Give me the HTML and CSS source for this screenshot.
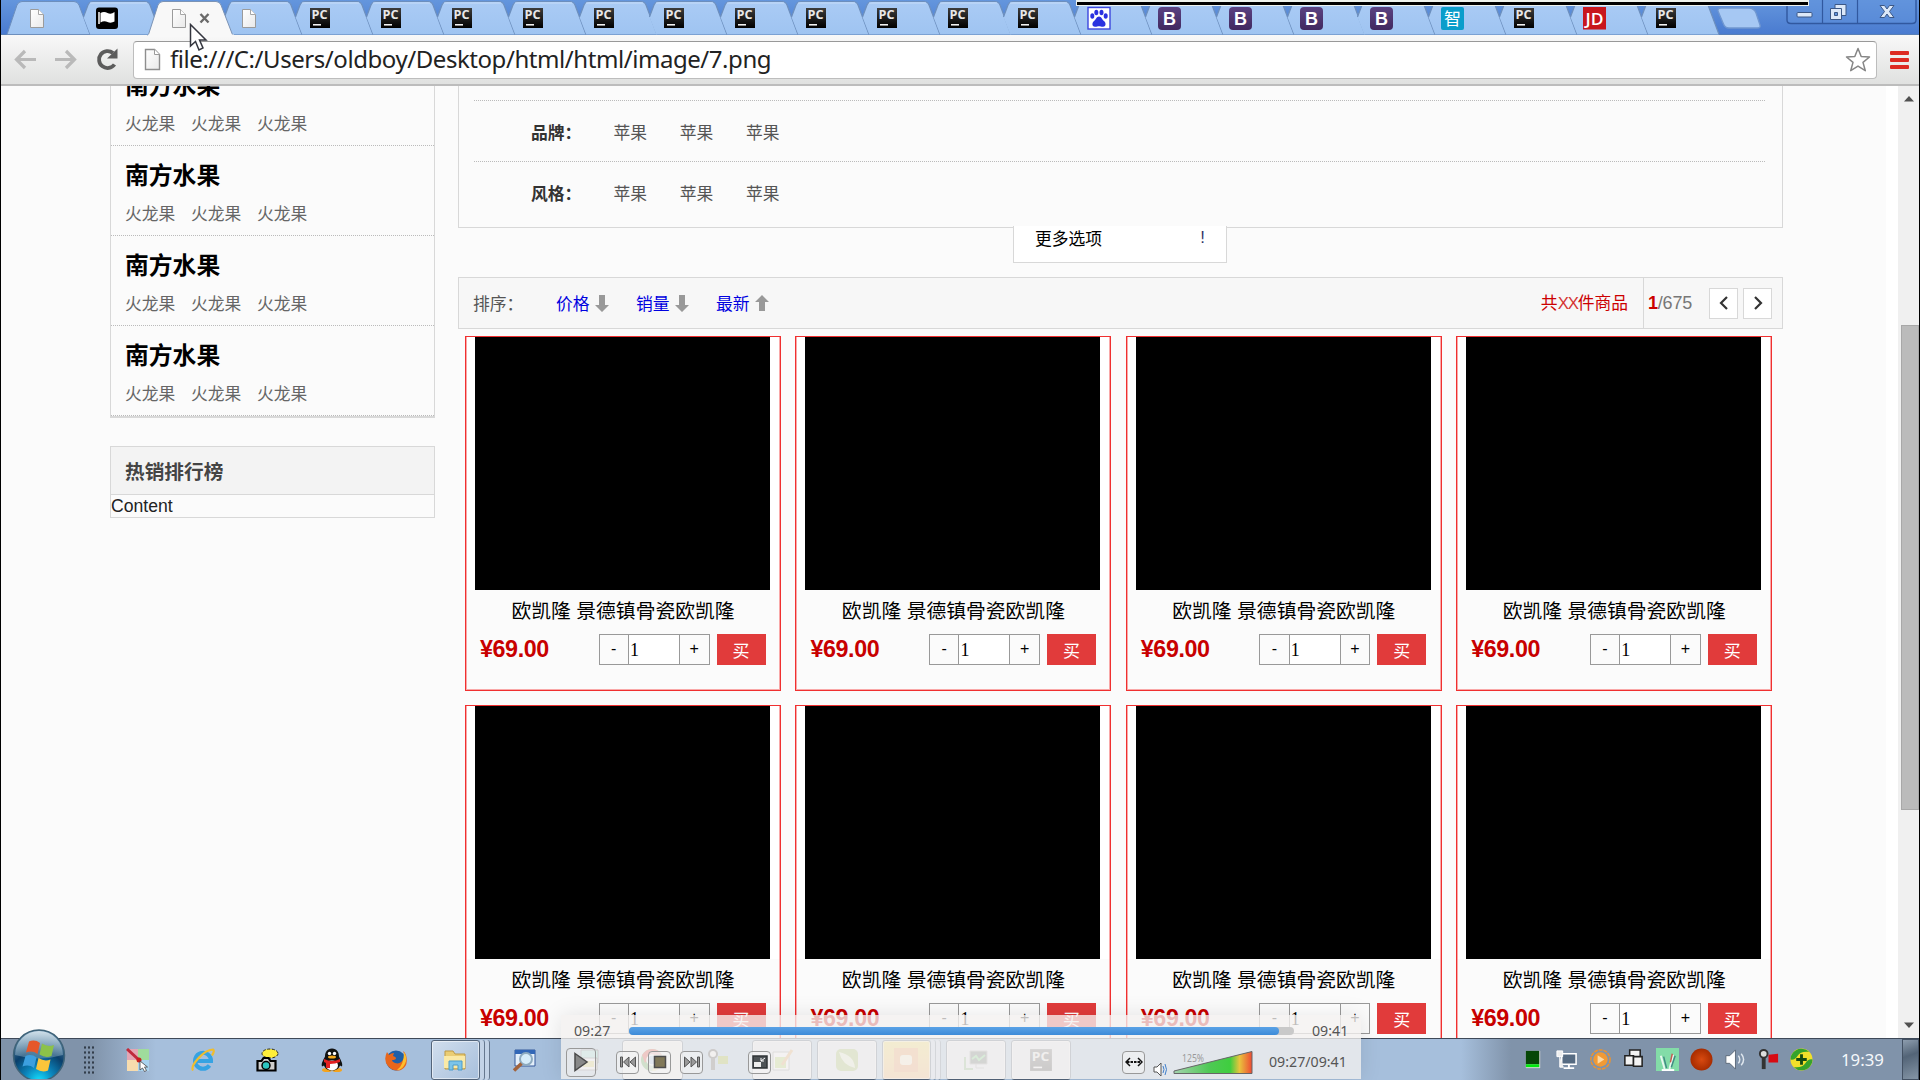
FILE: index.html
```html
<!DOCTYPE html>
<html lang="zh-CN">
<head>
<meta charset="utf-8">
<title>7.png</title>
<link rel="stylesheet" href="styles.css">
</head>
<body>
<svg class="defs" width="0" height="0">
  <defs>
    <linearGradient id="gTab" x1="0" y1="0" x2="0" y2="1"><stop offset="0" stop-color="#aacbf5"/><stop offset="1" stop-color="#9fc4f1"/></linearGradient>
    <linearGradient id="gDoc" x1="0" y1="0" x2="1" y2="1"><stop offset="0" stop-color="#fff"/><stop offset="1" stop-color="#e9e9e9"/></linearGradient>
    <linearGradient id="gPc" x1="0" y1="0" x2="0" y2="1"><stop offset="0" stop-color="#3c3c3c"/><stop offset="1" stop-color="#000"/></linearGradient>
    <linearGradient id="gB" x1="0" y1="0" x2="0" y2="1"><stop offset="0" stop-color="#5b4282"/><stop offset="1" stop-color="#41295f"/></linearGradient>
    <radialGradient id="gOrb" cx=".5" cy="1" r=".95"><stop offset="0" stop-color="#16e2ff"/><stop offset=".3" stop-color="#0b86bd"/><stop offset=".62" stop-color="#0a3f6b"/><stop offset="1" stop-color="#5c87a6"/></radialGradient>
    <linearGradient id="gGloss" x1="0" y1="0" x2="0" y2="1"><stop offset="0" stop-color="#e4eff5" stop-opacity=".85"/><stop offset="1" stop-color="#9dbccd" stop-opacity=".35"/></linearGradient>
    <linearGradient id="gVol" x1="0" y1="0" x2="1" y2="0"><stop offset="0" stop-color="#a5d3ae"/><stop offset=".45" stop-color="#4fc955"/><stop offset=".72" stop-color="#3fce3f"/><stop offset=".84" stop-color="#e9c33d"/><stop offset="1" stop-color="#ee4a33"/></linearGradient>
    <radialGradient id="gRed"><stop offset="0" stop-color="#d94a10"/><stop offset="1" stop-color="#a72c00"/></radialGradient>
    <g id="tab"><path d="M12.2 34.500L5.500 17L10 5Q11.500 1.500 15 1.500H67Q70.500 1.500 72 5L83 34.500Z" fill="url(#gTab)"/><path d="M5.500 17L10 5Q11.500 1.500 15 1.500H67Q70.500 1.500 72 5L83 34.500" fill="none" stroke="#6d8fbd" stroke-width="1.200"/><path d="M12 3H69" stroke="#c7dcf8"/></g>
    <g id="doc"><path d="M23.500 9.500h8l5 5v13h-13z" fill="url(#gDoc)" stroke="#9b9b9b"/><path d="M31.500 9.500v5h5" fill="#fff" stroke="#a6a6a6"/></g>
    <g id="pc"><rect x="20" y="8" width="20" height="20" fill="url(#gPc)"/><text x="21.500" y="19" font-family="Open Sans" font-weight="700" font-size="12" fill="#e8e8e8" textLength="16" lengthAdjust="spacingAndGlyphs">PC</text><path d="M23 24.800h8" stroke="#fff" stroke-width="1.500"/></g>
    <g id="bs"><rect x="18" y="7" width="23" height="23" rx="4" fill="url(#gB)"/><text x="29.500" y="24.500" text-anchor="middle" font-family="Liberation Sans" font-weight="700" font-size="18" fill="#fff">B</text></g>
  </defs>
</svg>

<header class="strip">
  <div class="tabs">
    <svg class="tab"><path d="M0 34.500L10 5Q11.500 1.500 15 1.500H67Q70.500 1.500 72 5L83 34.500Z" fill="url(#gTab)" stroke="#6d8fbd"/><use href="#doc"/></svg>
    <svg class="tab"><use href="#tab"/><rect x="18" y="7.500" width="22" height="21.500" rx="3" fill="#000"/><path d="M21 12v12" stroke="#fff" stroke-width="1.500"/><path d="M22.500 13q3.500-2 7 0t7-1v9.500q-3.500 2-7 .5t-7 .5z" fill="#fff"/></svg>
    <svg class="tab active"><path d="M-1 36L9 5Q10.500 1.500 14 1.500H67Q70.500 1.500 72 5L84 36Z" fill="#f8f8f8" stroke="#7b93b5"/><path d="M-1 36H85" stroke="#f8f8f8" stroke-width="3"/><use href="#doc"/><path d="M51.500 14l8 8.500m0-8.500l-8 8.500" stroke="#6a6a6a" stroke-width="2.400"/></svg>
    <svg class="tab"><use href="#tab"/><use href="#doc"/></svg>
    <svg class="tab"><use href="#tab"/><use href="#pc"/></svg>
    <svg class="tab"><use href="#tab"/><use href="#pc"/></svg>
    <svg class="tab"><use href="#tab"/><use href="#pc"/></svg>
    <svg class="tab"><use href="#tab"/><use href="#pc"/></svg>
    <svg class="tab"><use href="#tab"/><use href="#pc"/></svg>
    <svg class="tab"><use href="#tab"/><use href="#pc"/></svg>
    <svg class="tab"><use href="#tab"/><use href="#pc"/></svg>
    <svg class="tab"><use href="#tab"/><use href="#pc"/></svg>
    <svg class="tab"><use href="#tab"/><use href="#pc"/></svg>
    <svg class="tab"><use href="#tab"/><use href="#pc"/></svg>
    <svg class="tab"><use href="#tab"/><use href="#pc"/></svg>
    <svg class="tab"><use href="#tab"/><rect x="19" y="7.500" width="22" height="21.500" fill="#fff" stroke="#3c46dd" stroke-width="1.400"/><g fill="#2a32e0" transform="translate(1)"><ellipse cx="22.300" cy="16" rx="2" ry="2.800"/><ellipse cx="26.300" cy="12.500" rx="2" ry="2.800"/><ellipse cx="31.500" cy="12.500" rx="2" ry="2.800"/><ellipse cx="35.700" cy="16" rx="2" ry="2.800"/><path d="M29 16.500c2.500 0 3 3 5 4.500s2.500 5.500-1 5.800c-2 0-2.500-.6-4-.6s-2 .6-4 .6c-3.500-.3-3-4.300-1-5.800s2.500-4.500 5-4.500z"/></g></svg>
    <svg class="tab"><use href="#tab"/><use href="#bs"/></svg>
    <svg class="tab"><use href="#tab"/><use href="#bs"/></svg>
    <svg class="tab"><use href="#tab"/><use href="#bs"/></svg>
    <svg class="tab"><use href="#tab"/><use href="#bs"/></svg>
    <svg class="tab"><use href="#tab"/><rect x="18" y="7" width="23" height="23" rx="2" fill="#0a9dcb"/><text x="29.500" y="24.500" text-anchor="middle" font-family="Noto Sans CJK SC" font-size="17" fill="#fff">智</text></svg>
    <svg class="tab"><use href="#tab"/><use href="#pc"/></svg>
    <svg class="tab"><use href="#tab"/><rect x="18" y="7" width="23" height="22.500" fill="#c8161d"/><text x="29.500" y="24.500" text-anchor="middle" font-family="Open Sans" font-weight="600" font-size="16" fill="#fff" textLength="18" lengthAdjust="spacingAndGlyphs">JD</text></svg>
    <svg class="tab"><use href="#tab"/><use href="#pc"/></svg>
  </div>
  <svg class="newtab" width="46" height="24"><path d="M5 1H33Q38 1 40 6L44 18Q45 21 41 21H13Q9 21 7.500 17L2 4Q1.500 1 5 1Z" fill="#a6c8f3" stroke="#7097d0" stroke-width="1.300"/></svg>
  <svg class="controls" width="132" height="26"><path d="M1 0V20Q1 23.500 5 23.500H126Q130 23.500 130 20V0" fill="#5f92db" fill-opacity=".5" stroke="#31589f" stroke-width="1.400"/><path d="M36.500 0V23M71.500 0V23" stroke="#31589f" stroke-width="1.200"/><rect x="11" y="12.500" width="15" height="4.500" rx="1" fill="#dce8f8" stroke="#3c5886"/><path d="M49 4.500h11v11h-11z" fill="#dce8f8" stroke="#3c5886"/><path d="M44.500 8.500h11v11h-11z" fill="#dce8f8" stroke="#3c5886"/><path d="M48.500 12.500h3v3h-3z" fill="#5f92db" stroke="#3c5886"/><path d="M94 5.500h4.500l2.500 3.500 2.500-3.500h4.500l-4.500 6 4.500 6h-4.500l-2.500-3.500-2.500 3.500h-4.500l4.500-6z" fill="#dce8f8" stroke="#3c5886"/></svg>
</header>
<div class="recorder-edge"></div>

<nav class="toolbar">
  <svg class="nav-icons" width="131" height="49"><g fill="none" stroke="#b9b9b9" stroke-width="3.200"><path d="M36 24.500H17M25 16l-8.500 8.500L25 33"/><path d="M55 24.500H74M66 16l8.500 8.500L66 33"/></g><path d="M114.500 29.500A8.500 8.500 0 1 1 113 18" fill="none" stroke="#5c5c5c" stroke-width="3.800"/><path d="M117.500 13.500v10h-10.500z" fill="#5c5c5c"/></svg>
  <div class="omnibox">
    <svg width="18" height="24"><path d="M1.500 1.500h9l5 5v15h-14z" fill="url(#gDoc)" stroke="#8e8e8e" stroke-width="1.400"/><path d="M10.500 1.500v5h5" fill="#fff" stroke="#9a9a9a"/></svg>
    <span class="url">file:///C:/Users/oldboy/Desktop/html/html/image/7.png</span>
    <svg class="star" width="26" height="26"><path d="M13 1.500l3.200 8 8.300.5-6.500 5.400 2.300 8.300L13 19.100l-7.300 4.600L8 15.400 1.500 10l8.300-.5z" fill="#fff" stroke="#868686" stroke-width="1.500" stroke-linejoin="round"/></svg>
  </div>
  <div class="menu"><i></i><i></i><i></i></div>
</nav>

<div class="viewport">
  <main class="page">
    <aside class="side">
      <ul class="cats">
        <li><h3>南方水果</h3><p><a>火龙果</a><a>火龙果</a><a>火龙果</a></p></li>
        <li><h3>南方水果</h3><p><a>火龙果</a><a>火龙果</a><a>火龙果</a></p></li>
        <li><h3>南方水果</h3><p><a>火龙果</a><a>火龙果</a><a>火龙果</a></p></li>
        <li><h3>南方水果</h3><p><a>火龙果</a><a>火龙果</a><a>火龙果</a></p></li>
      </ul>
      <section class="hot"><h4>热销排行榜</h4><div>Content</div></section>
    </aside>
    <section class="main">
      <div class="filter">
        <div class="frow first"></div>
        <div class="frow"><b>品牌：</b><a>苹果</a><a>苹果</a><a>苹果</a></div>
        <div class="frow"><b>风格：</b><a>苹果</a><a>苹果</a><a>苹果</a></div>
      </div>
      <div class="more"><span>更多选项</span><span class="bang">!</span></div>
      <div class="sort">
        <span class="lbl">排序：</span>
        <a>价格<svg width="14" height="17"><path d="M4 0h6v10h4l-7 7-7-7h4z" fill="#999"/></svg></a>
        <a>销量<svg width="14" height="17"><path d="M4 0h6v10h4l-7 7-7-7h4z" fill="#999"/></svg></a>
        <a>最新<svg width="14" height="17"><path d="M4 16h6V7h4L7 0 0 7h4z" fill="#999"/></svg></a>
        <span class="total">共<i>XX</i>件商品</span>
        <div class="pager"><span><b>1</b>/675</span>
          <button><svg width="10" height="14"><path d="M8 1L2 7l6 6" fill="none" stroke="#333" stroke-width="2.200"/></svg></button>
          <button><svg width="10" height="14"><path d="M2 1l6 6-6 6" fill="none" stroke="#333" stroke-width="2.200"/></svg></button>
        </div>
      </div>
      <div class="goods">
        <article><div class="pic"></div><h5>欧凯隆 景德镇骨瓷欧凯隆</h5><div class="buy"><strong>¥69.00</strong><div class="qty"><span>-</span><em>1</em><span>+</span></div><button>买</button></div></article>
        <article><div class="pic"></div><h5>欧凯隆 景德镇骨瓷欧凯隆</h5><div class="buy"><strong>¥69.00</strong><div class="qty"><span>-</span><em>1</em><span>+</span></div><button>买</button></div></article>
        <article><div class="pic"></div><h5>欧凯隆 景德镇骨瓷欧凯隆</h5><div class="buy"><strong>¥69.00</strong><div class="qty"><span>-</span><em>1</em><span>+</span></div><button>买</button></div></article>
        <article><div class="pic"></div><h5>欧凯隆 景德镇骨瓷欧凯隆</h5><div class="buy"><strong>¥69.00</strong><div class="qty"><span>-</span><em>1</em><span>+</span></div><button>买</button></div></article>
        <article><div class="pic"></div><h5>欧凯隆 景德镇骨瓷欧凯隆</h5><div class="buy"><strong>¥69.00</strong><div class="qty"><span>-</span><em>1</em><span>+</span></div><button>买</button></div></article>
        <article><div class="pic"></div><h5>欧凯隆 景德镇骨瓷欧凯隆</h5><div class="buy"><strong>¥69.00</strong><div class="qty"><span>-</span><em>1</em><span>+</span></div><button>买</button></div></article>
        <article><div class="pic"></div><h5>欧凯隆 景德镇骨瓷欧凯隆</h5><div class="buy"><strong>¥69.00</strong><div class="qty"><span>-</span><em>1</em><span>+</span></div><button>买</button></div></article>
        <article><div class="pic"></div><h5>欧凯隆 景德镇骨瓷欧凯隆</h5><div class="buy"><strong>¥69.00</strong><div class="qty"><span>-</span><em>1</em><span>+</span></div><button>买</button></div></article>
      </div>
    </section>
  </main>
  <div class="scroll">
    <svg width="12" height="7"><path d="M1 6.500L6 1l5 5.500z" fill="#505050"/></svg>
    <div class="thumb"></div>
    <svg width="12" height="7"><path d="M1 .5L6 6l5-5.500z" fill="#505050"/></svg>
  </div>
</div>

<footer class="taskbar">
  <div class="dock">
    <svg class="orb" width="54" height="50"><circle cx="27" cy="26.500" r="25.500" fill="url(#gOrb)" stroke="#3f6378" stroke-width="1.500"/><path d="M3 26A24 24 0 0 1 51 26Q27 33 3 26Z" fill="url(#gGloss)"/><path d="M17 12.500q6-2.500 11 1.500l-2.500 11q-5-4-11.500-1.500z" fill="#e5572a"/><path d="M30 14.500q6 4 12 1.500l-2.500 11q-6 2.500-12-1.500z" fill="#8cc249"/><path d="M13.500 27q6-2.500 11 1.500l-2.500 10.500q-5-4-11.500-1.500z" fill="#3c9fdf"/><path d="M26.500 29q6 4 12 1.500l-2.500 11q-6 2.500-12-1.500z" fill="#fbc53b"/></svg>
    <div class="grip"></div>
    <svg class="ico" viewBox="0 0 24 24"><path d="M1 1h11v11H1z" fill="#e4a6b4"/><path d="M12 1h11v11H12z" fill="#9fdc9c"/><path d="M1 12h11v11H1z" fill="#f7dcae"/><path d="M12 12h11v11H12z" fill="#a9d3ee"/><path d="M1 1l12 11" stroke="#c02a3c" stroke-width="3"/><circle cx="13" cy="12" r="2.500" fill="#c81e1e"/><path d="M14 13v9l2.500-2 2 3.500 2-1-2-3.500h3z" fill="#fff" stroke="#444" stroke-width=".8"/></svg>
    <svg class="ico" viewBox="0 0 24 24"><path d="M18.500 17.500A8 8 0 1 1 20 13H6" fill="none" stroke="#35a3e3" stroke-width="4"/><path d="M2 22.500C-1 18 12 2 22 1.500q2 1-1 6" fill="none" stroke="#f0bd2e" stroke-width="2.200"/></svg>
    <svg class="ico" viewBox="0 0 24 24"><ellipse cx="15" cy="5.500" rx="8" ry="4.500" fill="#ffee3a" stroke="#222" stroke-dasharray="3 1.500"/><path d="M2.500 13h4l2-3h5l2 3h5v9.500h-18z" fill="#cdcdcd" stroke="#000" stroke-width="2.200"/><circle cx="11" cy="17.500" r="4" fill="#2ec6c1" stroke="#000" stroke-width="1.500"/></svg>
    <svg class="ico" viewBox="0 0 24 24"><ellipse cx="7" cy="22" rx="5" ry="2" fill="#f4a31d"/><ellipse cx="17" cy="22" rx="5" ry="2" fill="#f4a31d"/><path d="M12 .5c5 0 7 4 7 8 2 4 4 7 3 10l-2-1c-1 3-4 5-8 5s-7-2-8-5l-2 1c-1-3 1-6 3-10 0-4 2-8 7-8z" fill="#111"/><ellipse cx="12" cy="17.500" rx="6" ry="5" fill="#fff"/><circle cx="9.500" cy="5.500" r="1.700" fill="#fff"/><circle cx="14.500" cy="5.500" r="1.700" fill="#fff"/><ellipse cx="12" cy="9" rx="4" ry="1.500" fill="#f7a81b"/><path d="M4 11q8 4 16 0v3q-5 2-10 2v4H6v-5l-2-1z" fill="#e22020"/></svg>
    <svg class="ico" viewBox="0 0 24 24"><circle cx="12" cy="12.500" r="10" fill="#1f5fa8"/><path d="M3 4q-4 8 1 14t13 4q8-4 5-15-1-3-3-4 2 4 1 7-3 7-9 5-3-1-3-3 4 0 4-2 0-1-3-2l1-3q-3 0-5 2z" fill="#e8661b"/><path d="M20 4q4 6 1 12t-8 6q7-5 7-18z" fill="#fdbe2d"/></svg>
    <div class="win explorer"><svg class="ico" viewBox="0 0 24 24"><path d="M2 3h8l2 3h10v15H2z" fill="#eacd74" stroke="#bd9a45"/><path d="M1 8h21v12H1z" fill="#fae9a6"/><path d="M6 22v-9h13v9h-4v-5h-5v5z" fill="#7bc4ea" stroke="#4c9ccb"/></svg></div>
    <div class="stack"></div><div class="stack"></div>
    <svg class="ico mag" viewBox="0 0 24 24"><path d="M3 2h20v16H3z" fill="#e4effa" stroke="#34589a"/><path d="M3 2h20v4H3z" fill="#3267b7"/><circle cx="14" cy="11" r="6" fill="#d5ecfa" fill-opacity=".9" stroke="#8eabc0" stroke-width="2"/><path d="M9.500 15.500L2 22.500" stroke="#a2633c" stroke-width="3.500"/></svg>
    <svg class="ico card" viewBox="0 0 24 24"><path d="M5 2h17v13H5z" fill="#80d8c9" stroke="#444"/><path d="M1 10h20v12H1z" fill="#fff" stroke="#444"/><path d="M7 13h11v6H7z" fill="#e9d13c"/></svg>
    <div class="win w61"><svg class="ico" viewBox="0 0 24 24"><circle cx="12" cy="12" r="11" fill="#57a54f"/><path d="M12 1a11 11 0 0 1 10 6H12L5 15 2 7q4-6 10-6z" fill="#dc3d34"/><path d="M22 7a11 11 0 0 1-10 16l5-9z" fill="#f3cb35"/><circle cx="12" cy="12" r="5" fill="#3d7cc8" stroke="#fff" stroke-width="1.500"/></svg></div>
    <svg class="ico key" viewBox="0 0 24 24"><circle cx="7" cy="6" r="4" fill="#eee" stroke="#444" stroke-width="2"/><path d="M7 10v12" stroke="#555" stroke-width="4"/><path d="M12 8h10v8H12z" fill="#9bb32c"/></svg>
    <div class="win w60"><svg class="ico" viewBox="0 0 24 24"><path d="M3 4h16v18H3z" fill="#fff" stroke="#777"/><path d="M5 9h11v11H5z" fill="#a7d33c"/><path d="M22 2L12 17" stroke="#e4912d" stroke-width="3"/></svg></div>
    <div class="win w60"><svg class="ico" viewBox="0 0 24 24"><rect x="1" y="1" width="22" height="22" rx="5" fill="#8bad35"/><path d="M4 4q3 13 16 16Q19 7 4 4z" fill="#e9f2c4"/></svg></div>
    <div class="win w49"><svg class="ico" viewBox="0 0 24 24"><path d="M0 0h24v24H0z" fill="#f0935f"/><rect x="6" y="7" width="12" height="10" rx="3" fill="#fff"/></svg></div>
    <div class="stack"></div><div class="stack"></div>
    <div class="win w60 last"><svg class="ico" viewBox="0 0 24 24"><path d="M6 3h17v13H6z" fill="#364137" stroke="#999"/><path d="M8 11l4-3 3 4 6-5" stroke="#53d35d" stroke-width="2" fill="none"/><path d="M1 9v12h8" stroke="#65a358" stroke-width="2" fill="none"/><path d="M12 16v4h8" stroke="#999" fill="none"/></svg></div>
    <div class="win w60"><svg class="ico" viewBox="19 7 22 22"><use href="#pc"/></svg></div>
  </div>
  <div class="tray">
    <svg viewBox="0 0 24 24"><path d="M4 3h15v18H4z" fill="#dadada"/><path d="M4 3h14v14H4z" fill="#064706"/><path d="M4 17h14v3H4z" fill="#00e90e"/></svg>
    <svg viewBox="0 0 24 24"><path d="M7 6h15v11H7z" fill="#566b82" stroke="#fff" stroke-width="1.600"/><path d="M9 21h11M14.500 17v4" stroke="#fff" stroke-width="2"/><path d="M2 3h6v6H2zM5 9v11h4" fill="#eee" stroke="#fff"/></svg>
    <svg viewBox="0 0 24 24"><circle cx="12" cy="12" r="10" fill="none" stroke="#f0932b" stroke-width="1.500" stroke-dasharray="4 1"/><circle cx="12" cy="12" r="7.500" fill="#f19a35"/><path d="M9 7.500l7 4.500-7 4.500z" fill="#fbd9a5"/></svg>
    <svg viewBox="0 0 24 24" fill="#f3f3f3" stroke="#222" stroke-width="1.600"><path d="M8 2h11v9H8z"/><path d="M3 8h9v10H3z"/><path d="M12 9h9v10h-9z" /></svg>
    <svg viewBox="0 0 24 24"><path d="M0 0h24v24H0z" fill="#83dca8"/><path d="M5 8l4 14M18 7l-4 15" stroke="#e9f7ef" stroke-width="2"/><path d="M8 9l3 12M20 8l-4 12" stroke="#408a84" stroke-width="1.500"/><path d="M17 6l-2 9" stroke="#c5584e" stroke-width="1.500"/><path d="M6 23h13" stroke="#fff" stroke-width="2"/></svg>
    <svg viewBox="0 0 24 24"><circle cx="12" cy="12" r="11.500" fill="url(#gRed)"/></svg>
    <svg viewBox="0 0 24 24"><path d="M3 8h4l6-6v20l-6-6H3z" fill="#fff" stroke="#5c6a79"/><path d="M16 8q3 4 0 8M19 6q5 6 0 12" fill="none" stroke="#dfe7ee" stroke-width="1.500"/></svg>
    <svg viewBox="0 0 24 24"><circle cx="7" cy="6" r="4" fill="#ddd" stroke="#333" stroke-width="2"/><path d="M7 10v12" stroke="#333" stroke-width="4"/><path d="M12 7l10-1v9H12z" fill="#d70b12"/></svg>
    <svg viewBox="0 0 24 24"><circle cx="12" cy="12" r="11.500" fill="#f2e02a"/><path d="M3 5A11.500 11.500 0 0 1 20 4q-9-1-12 4t-7.500 4q0-4 2.500-7z" fill="#35a32c"/><path d="M21 19A11.500 11.500 0 0 1 4 20q9 1 12-4t7.500-4q0 4-2.500 7z" fill="#35a32c"/><path d="M12 6.500v11M6.500 12h11" stroke="#164b12" stroke-width="3"/></svg>
    <time>19:39</time>
    <div class="desk"></div>
  </div>
</footer>

<div class="player">
  <div class="seek"><span>09:27</span><div class="track"><div class="fill"></div></div><span>09:41</span></div>
  <div class="ctl">
    <button class="play"><svg width="18" height="22"><path d="M3 2.500l12 8.500L3 19.500z" fill="#888" stroke="#4a4a4a" stroke-width="1.500"/></svg></button>
    <button class="prev"><svg width="18" height="14"><path d="M1.500 2h2v10h-2zM10 2v10L4.500 7zM16.500 2v10L11 7z" fill="#999" stroke="#555"/></svg></button>
    <button class="stop"><svg width="14" height="14"><path d="M1.500 1.500h11v11h-11z" fill="#807858" stroke="#4d4d4d" stroke-width="1.500"/></svg></button>
    <button class="next"><svg width="18" height="14"><path d="M14.500 2h2v10h-2zM8 2v10l5.500-5zM1.500 2v10L7 7z" fill="#999" stroke="#555"/></svg></button>
    <button class="full"><svg width="16" height="14"><path d="M1 1h14v12H1z" fill="#4e5356" stroke="#303437" stroke-width="1.500"/><path d="M2 7h7v5H2z" fill="#eee"/><path d="M13 3l-4 3M9 3v3h3" stroke="#fff" fill="none"/></svg></button>
    <button class="fit"><svg width="18" height="10"><path d="M5 1L1 5l4 4M13 1l4 4-4 4" fill="none" stroke="#111" stroke-width="1.500"/><path d="M2 5h14" stroke="#111" stroke-width="2" stroke-dasharray="2.500 1"/></svg></button>
    <svg class="spk" width="15" height="15"><path d="M1 5h3l4-4v13l-4-4H1z" fill="#fff" stroke="#555"/><path d="M10 4q2 3.500 0 7M12 2q3 5.500 0 11" fill="none" stroke="#3f7fcb"/></svg>
    <svg class="vol" width="82" height="26"><path d="M2 24.500V22L80 2.500v22z" fill="url(#gVol)" stroke="#666"/><text x="10" y="12.500" font-family="Noto Sans" font-size="10" fill="#9a9a9a" textLength="22" lengthAdjust="spacingAndGlyphs">125%</text></svg>
    <span class="time">09:27/09:41</span>
  </div>
</div>
<svg class="cursor" width="20" height="30"><path d="M1.500 1.500V23l5-4.500L10 27l4-2-3.500-8H17z" fill="#fff" stroke="#34363f" stroke-width="1.500"/></svg>
</body>
</html>
```
FILE: styles.css
```css
* { box-sizing: border-box; }
body {
  margin: 0; width: 1920px; height: 1080px; overflow: hidden; position: relative;
  display: flex; flex-direction: column;
  background: #fff; border: solid #000; border-width: 0 1px;
  font-family: "Liberation Sans", "Noto Sans CJK SC", sans-serif; font-size: 16.8px; color: #000;
}
h3, h4, h5, p, ul { margin: 0; padding: 0; list-style: none; }
button { padding: 0; border: 0; font: inherit; display: flex; align-items: center; justify-content: center; }
svg { flex: none; display: block; }
.defs { position: absolute; }

.strip { height: 35px; flex: none; display: flex; padding-left: 6px; background: linear-gradient(#6496dd, #4a7bd0); border-bottom: 1px solid #587fb5; }
.tabs { display: flex; flex: none; width: 1711px; }
.tab { width: 83px; height: 36px; margin-right: -12.200px; overflow: visible; }
.tab.active { position: relative; z-index: 2; }
.newtab { margin-top: 7px; margin-left: -2px; }
.controls { margin-left: 23.500px; }
.recorder-edge { position: absolute; z-index: 3; left: 1075px; top: 0; width: 733px; height: 6px; background: #000; border: solid #eef3ee; border-width: 2px 1px 1px; }

.toolbar { height: 51px; flex: none; display: flex; align-items: center; background: linear-gradient(#f8f8f8, #e0e1e0); border-bottom: 2px solid #bcbcbc; }
.nav-icons { margin-left: -1px; }
.omnibox { flex: none; width: 1744px; height: 38px; margin-left: 2px; padding: 0 5px 0 10px; display: flex; align-items: center; background: #fff; border: 1.500px solid #bdbdbd; border-top-color: #999; border-radius: 4px; }
.url { margin-left: 8px; padding-bottom: 2px; font: 24px/32px "Noto Sans", sans-serif; letter-spacing: -.44px; color: #222; white-space: nowrap; }
.star { margin-left: auto; }
.menu { margin-left: 13px; display: grid; gap: 3px; }
.menu i { width: 19px; height: 4px; border-radius: 1px; background: #dd2a22; }

.viewport { flex: none; height: 952px; display: flex; overflow: hidden; }
.page { width: 1885px; flex: none; display: flex; align-items: flex-start; padding-left: 109px; background: #fbfbfb; }
.side { width: 325px; flex: none; }
.cats { margin-top: -31px; border: 1px solid #d8d8d8; border-bottom-width: 2px; }
.cats li { height: 90px; padding: 14px 0 0 14px; border-bottom: 1px dotted #bbb; }
.cats h3 { font-size: 23.800px; line-height: 31px; font-weight: 700; }
.cats p { margin-top: 12px; display: flex; gap: 15.600px; line-height: 24px; color: #666; }
.hot { margin-top: 28px; border: 1px solid #d8d8d8; }
.hot h4 { height: 48px; padding-left: 14px; font-size: 19.700px; line-height: 50px; color: #444; background: #f3f3f3; border-bottom: 1px solid #d8d8d8; }
.hot div { height: 22px; font-size: 17.600px; line-height: 23px; color: #222; }

.main { width: 1325px; flex: none; margin-left: 23px; }
.filter { height: 142px; padding: 0 17px 0 15px; border: solid #d8d8d8; border-width: 0 1px 1px; }
.frow { height: 60.500px; padding: 2px 0 0 57px; display: flex; align-items: center; color: #555; }
.frow.first { height: 15px; padding: 0; }
.frow:not(:last-child) { border-bottom: 1px dotted #bbb; }
.frow b { width: 82.500px; color: #333; }
.frow a { width: 66.200px; }
.more { position: relative; width: 214px; height: 37px; margin: -2px 0 0 555px; padding: 0 21px 13px 21px; display: flex; justify-content: space-between; align-items: center; background: #fff; border: solid #d8d8d8; border-width: 0 1px 1px; }
.bang { color: #336; }
.sort { height: 52px; margin-top: 14px; padding-left: 14px; display: flex; align-items: center; background: #f7f7f7; border: 1px solid #d8d8d8; color: #555; }
.lbl { width: 83px; }
.sort a { width: 80px; display: flex; align-items: center; gap: 5px; color: #0000e0; }
.total { margin-left: auto; height: 50px; line-height: 51px; padding-right: 15px; border-right: 1px solid #d8d8d8; color: #c00; }
.total i { display: inline-block; font-style: normal; width: 20px; letter-spacing: -1.200px; opacity: .8; }
.pager { width: 138px; padding-left: 4px; display: flex; align-items: center; gap: 5px; font-size: 18px; color: #777; }
.pager span { width: 56px; letter-spacing: -.2px; }
.pager b { color: #c00; }
.pager button { width: 29px; height: 31px; background: #fff; border: 1px solid #d8d8d8; }

.goods { margin-top: 7px; padding-left: 7px; display: grid; grid-template-columns: repeat(4, 316px); column-gap: 14.400px; row-gap: 14px; }
.goods article { height: 354.500px; border: 1px solid #f03030; box-shadow: inset 0 0 0 1px #f9a8a8; }
.pic { height: 253px; margin: 0 1px; background: #000; border: solid #fff; border-width: 0 9px 0 8px; }
.goods h5 { height: 44px; font-size: 19.800px; line-height: 42px; font-weight: 400; text-align: center; white-space: nowrap; }
.buy { display: flex; align-items: center; padding-left: 14px; }
.buy strong { width: 118.500px; font-size: 23.300px; letter-spacing: -.4px; color: #c80000; }
.qty { width: 111px; height: 31px; flex: none; display: flex; border: 1px solid #999; line-height: 28px; font-size: 16px; }
.qty span { flex: 1; text-align: center; }
.qty em { width: 52px; padding-left: 1px; font: 18px/30px "Liberation Serif", serif; background: #fff; border: solid #999; border-width: 0 1px; }
.buy button { width: 49px; height: 31px; margin-left: 7px; color: #fff; background: #e13b3b; font-size: 17px; }

.scroll { width: 21px; margin-left: 12px; padding: 9px 0 9px; display: flex; flex-direction: column; align-items: center; background: #f0f0f0; }
.thumb { width: 18px; height: 485px; margin: 223px 0 auto 3px; background: #bbb; border: 1px solid #a8a8a8; }

.taskbar { height: 42px; flex: none; display: flex; border-top: 1.500px solid #3e4958; background: linear-gradient(90deg, #8093aa 0 90px, #a6bfdc 155px 1460px, #8093aa 1510px); }
.dock { display: flex; align-items: center; flex: none; width: 1075px; }
.orb { margin: -10px 0 0 11px; align-self: flex-start; position: relative; }
.grip { width: 12px; height: 30px; margin: 0 32px 0 17px; background: radial-gradient(circle, #333e4b 1px, transparent 1.300px) 0 0 / 4px 5px; }
.ico { width: 24px; height: 24px; margin-right: 40.500px; }
.win { height: 40px; flex: none; display: flex; align-items: center; justify-content: center; border: 1px solid #53647a; border-radius: 3px; background: linear-gradient(135deg, #dce6f2cc, #a9bfdb66); box-shadow: inset 0 0 0 1px #ffffff88; }
.win .ico { margin: 0; }
.explorer { width: 49px; margin-left: -18px; }
.stack { width: 5.500px; height: 40px; border-right: 1px solid #66788f; border-radius: 0 3px 3px 0; background: #c3d3e7; }
.mag { margin: 0 40px 0 22px; }
.card { margin-right: 22px; }
.w61 { width: 61px; background: #e8eaee; }
.key { margin: 0 22px 0 23px; }
.w60 { width: 60px; margin-right: 5px; background: #dde3ec; }
.w49 { width: 49px; background: linear-gradient(#f1dc66, #f7b673); }
.last { margin-left: 5px; }
.win.w60 .ico, .w49 .ico { opacity: .7; }
.tray { margin-left: auto; display: flex; align-items: center; }
.tray svg { width: 23px; height: 23px; margin-right: 10.600px; }
.tray time { width: 43px; margin: 0 18px 0 17px; font: 16.800px "Noto Sans", sans-serif; color: #f5f8fb; white-space: nowrap; }
.desk { width: 17px; height: 41px; border: 1px solid #435163; background: linear-gradient(160deg, #8d9dae, #536477 40%, #8495a6); }

.player { position: absolute; left: 560px; top: 1015px; width: 800px; height: 64px; background: rgba(243, 241, 239, .78); box-shadow: 0 0 22px rgba(0, 0, 0, .1); font: 14.200px/20px "Noto Sans", sans-serif; color: #555; }
.seek { height: 31px; display: flex; align-items: center; padding: 1px 13px 0; }
.seek span { width: 36px; white-space: nowrap; }
.track { width: 665px; height: 8px; margin: 0 18px 0 19px; border-radius: 4px; background: #c9c9c9; }
.fill { width: 650px; height: 8px; border-radius: 4px; background: linear-gradient(#5aa2e6, #3d8bd8); }
.ctl { height: 32px; display: flex; align-items: center; padding-left: 5px; }
.ctl button { width: 23px; height: 23px; flex: none; border: 1px solid #999; border-radius: 4px; background: #f4f4f499; }
.ctl .play { width: 30px; height: 29px; background: #e9ebec55; }
.ctl .prev { margin-left: 20px; }
.ctl .stop, .ctl .next { margin-left: 9px; }
.ctl .full { margin-left: 45px; }
.ctl .fit { margin-left: 351px; }
.spk { margin: 15px 0 0 8px; }
.vol { margin-left: 4px; }
.time { margin-left: 15px; white-space: nowrap; }
.cursor { position: absolute; z-index: 4; left: 188px; top: 23px; }
```
